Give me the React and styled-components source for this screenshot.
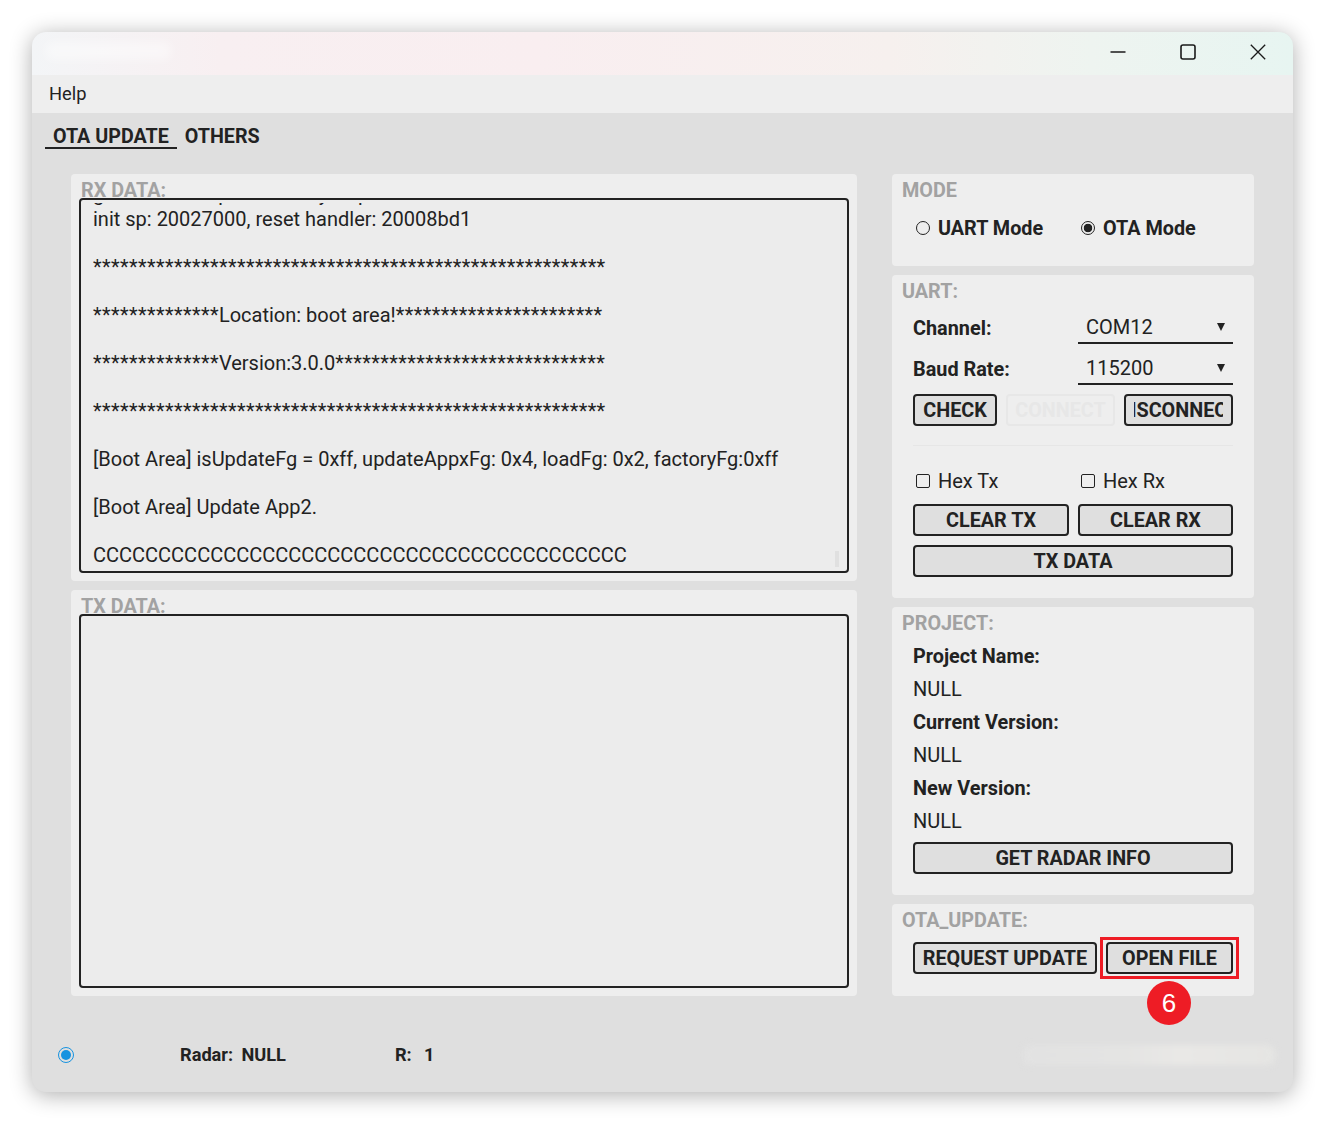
import React from 'react';
import styled, { createGlobalStyle } from 'styled-components';

const GlobalStyle = createGlobalStyle`
  html, body {
    margin: 0;
    padding: 0;
    background: #fff;
  }
  * {
    box-sizing: border-box;
  }
`;

const Page = styled.div`
  width: 1325px;
  height: 1124px;
  padding: 32px;
  overflow: hidden;
  font-family: Roboto, "Liberation Sans", sans-serif;
  font-size: 20px;
  color: #222;
`;

const Window = styled.div`
  width: 1261px;
  height: 1060px;
  display: flex;
  flex-direction: column;
  background: #dfdfdf;
  border-radius: 14px;
  overflow: hidden;
  box-shadow: 0 3px 22px rgba(0, 0, 0, 0.32);
`;

const TitleBar = styled.div`
  height: 43px;
  flex: none;
  display: flex;
  align-items: stretch;
  background: linear-gradient(90deg, #f3f5f7 0%, #f8eff1 15%, #f9eef0 40%, #f6f0ee 68%, #eef4f0 84%, #e7f5f1 100%);
`;

const BlurredTitle = styled.div`
  width: 125px;
  height: 18px;
  margin: 10px auto 0 14px;
  background: rgba(255, 255, 255, 0.42);
  border-radius: 6px;
  filter: blur(5px);
`;

const WinButton = styled.div`
  width: 70px;
  padding-bottom: 3px;
  display: flex;
  align-items: center;
  justify-content: center;
`;

const MenuBar = styled.div`
  height: 38px;
  flex: none;
  display: flex;
  align-items: center;
  padding: 0 0 1px 17px;
  background: #eee;
  font-size: 18.3px;
`;

const Tabs = styled.div`
  display: flex;
  height: 61px;
  flex: none;
  padding: 11px 0 0 13px;
`;

const Tab = styled.div`
  height: 25px;
  padding: 0 8px;
  line-height: 26px;
  font-size: 19.7px;
  font-weight: 700;
  border-bottom: 2px solid ${(p) => (p.$active ? '#222' : 'transparent')};
`;

const Main = styled.div`
  display: grid;
  grid-template-columns: 786px 362px;
  justify-content: space-between;
  padding: 0 39px;
  height: 822px;
  flex: none;
`;

const LeftColumn = styled.div`
  display: grid;
  grid-template-rows: 407px 406px;
  gap: 9px;
`;

const RightColumn = styled.div`
  display: flex;
  flex-direction: column;
  gap: 9px;
`;

const LogPanel = styled.section`
  display: flex;
  flex-direction: column;
  padding: 6px 8px 8px;
  background: #eee;
  border-radius: 4px;
  min-height: 0;
`;

const Panel = styled.section`
  padding: 6px 21px ${(p) => p.$bottom ?? 21}px;
  background: #eee;
  border-radius: 4px;
`;

const Title = styled.h2`
  margin: 0 0 0 2px;
  height: 18px;
  line-height: 22px;
  font-size: 19.8px;
  font-weight: 700;
  color: #a2a2a2;
  white-space: nowrap;
`;

const PanelTitle = styled(Title)`
  margin: 0 0 ${(p) => p.$gap ?? 13}px -11px;
`;

const TextBox = styled.div`
  position: relative;
  flex: 1;
  min-height: 0;
  padding: 3px 0 4px 12px;
  display: flex;
  background: #ececec;
  border: 2px solid #222;
  border-radius: 4px;
`;

const Log = styled.div`
  flex: 1;
  min-height: 0;
  overflow: hidden;
  display: flex;
  flex-direction: column;
  justify-content: flex-end;
`;

const LogLine = styled.div`
  flex: none;
  height: 24px;
  line-height: 24px;
  white-space: pre;
`;

const ClippedLine = styled(LogLine)`
  margin-bottom: 1px;
`;

const Stars = styled.span`
  letter-spacing: 0.38px;
`;

const ScrollThumb = styled.div`
  position: absolute;
  right: 8px;
  bottom: 4px;
  width: 4px;
  height: 16px;
  background: #e0e0e0;
`;

const TwoCols = styled.div`
  display: grid;
  grid-template-columns: 156px 155px;
  gap: 9px;
`;

const ModeRow = styled(TwoCols)`
  height: 30px;
`;

const CheckRow = styled(TwoCols)`
  height: 32px;
  margin-bottom: 7px;
`;

const Option = styled.label`
  display: flex;
  align-items: center;
  gap: 8px;
  padding-left: 3px;
  font-size: ${(p) => (p.$bold ? 19.8 : 20)}px;
  font-weight: ${(p) => (p.$bold ? 700 : 400)};
`;

const RadioInput = styled.input`
  appearance: none;
  width: 14px;
  height: 14px;
  margin: 0;
  flex: none;
  border: 1.3px solid #222;
  border-radius: 50%;
  background: transparent;

  &:checked {
    background: radial-gradient(circle, #222 0 4px, transparent 4.6px);
  }
`;

const CheckInput = styled(RadioInput)`
  border-radius: 2px;
`;

const FormRow = styled.div`
  display: grid;
  grid-template-columns: 165px 155px;
  align-items: center;
  height: 32px;
  margin-bottom: 9px;
  font-size: 19.85px;
  font-weight: 700;
`;

const Select = styled.div`
  display: flex;
  align-items: center;
  justify-content: space-between;
  height: 32px;
  padding: 0 8px;
  font-size: 20px;
  font-weight: 400;
  border-bottom: 2px solid #222;
`;

const Caret = styled.span`
  width: 0;
  height: 0;
  border-left: 4px solid transparent;
  border-right: 4px solid transparent;
  border-top: 8px solid #222;
`;

const Button = styled.button`
  height: 32px;
  width: 100%;
  padding: 0 8px;
  display: flex;
  align-items: center;
  justify-content: center;
  overflow: hidden;
  font: 700 19.8px Roboto, "Liberation Sans", sans-serif;
  white-space: nowrap;
  color: ${(p) => (p.disabled ? '#e7e7e7' : '#222')};
  background: ${(p) => (p.disabled ? 'transparent' : '#dfdfdf')};
  border: 2px solid ${(p) => (p.disabled ? '#e7e7e7' : '#222')};
  border-radius: 4px;
`;

const ClippedLabel = styled.span`
  display: flex;
  justify-content: center;
  width: 89px;
  overflow: hidden;
  flex: none;
`;

const ConnectRow = styled.div`
  display: grid;
  grid-template-columns: 84px 109px 109px;
  justify-content: space-between;
`;

const Divider = styled.hr`
  height: 1px;
  margin: 19px 0;
  border: 0;
  background: #e6e6e6;
`;

const StackButton = styled(Button)`
  margin-top: ${(p) => p.$top ?? 0}px;
`;

const InfoRow = styled.div`
  height: 33px;
  line-height: 33px;
  font-size: ${(p) => (p.$bold ? 19.85 : 20)}px;
  font-weight: ${(p) => (p.$bold ? 700 : 400)};
`;

const UpdateRow = styled.div`
  display: grid;
  grid-template-columns: 184px 127px;
  justify-content: space-between;
  padding-top: 14px;
`;

const Highlighted = styled.div`
  position: relative;
`;

const RedBox = styled.div`
  position: absolute;
  inset: -5px -6px;
  border: 3px solid #ee1c25;
  pointer-events: none;
`;

const StepBadge = styled.div`
  position: absolute;
  left: 41px;
  top: 39px;
  width: 44px;
  height: 44px;
  display: flex;
  align-items: center;
  justify-content: center;
  border-radius: 50%;
  background: #ee1c25;
  color: #fff;
  font: 400 26px "Liberation Sans", sans-serif;
`;

const StatusBar = styled.div`
  flex: 1;
  display: flex;
  align-items: center;
  padding: 21px 18px 0 26px;
  font-size: 18.2px;
  font-weight: 700;
  word-spacing: -0.4px;
`;

const StatusLed = styled.span`
  width: 16px;
  height: 16px;
  flex: none;
  padding: 2px;
  border: 1px solid #1793e0;
  border-radius: 50%;
  background: #1793e0;
  background-clip: content-box;
`;

const StatusText = styled.span`
  margin-left: ${(p) => p.$left}px;
  white-space: pre;
`;

const BlurredNote = styled.div`
  width: 252px;
  height: 20px;
  margin-left: auto;
  background: linear-gradient(90deg, #e2e2e2, #e4e4e3 40%, #e9e8e6 62%, #e5e5e3);
  border-radius: 6px;
  filter: blur(3px);
`;

const stars = (n) => <Stars>{'*'.repeat(n)}</Stars>;

const logLines = [
  'init sp: 20027000, reset handler: 20008bd1',
  '',
  stars(57),
  '',
  <>{stars(14)}Location: boot area!{stars(23)}</>,
  '',
  <>{stars(14)}Version:3.0.0{stars(30)}</>,
  '',
  stars(57),
  '',
  '[Boot Area] isUpdateFg = 0xff, updateAppxFg: 0x4, loadFg: 0x2, factoryFg:0xff',
  '',
  '[Boot Area] Update App2.',
  '',
  'C'.repeat(41),
];

const WindowIcon = ({ children }) => (
  <svg width="16" height="16" viewBox="0 0 16 16" fill="none" stroke="#1a1a1a" strokeWidth="1.3">
    {children}
  </svg>
);

const App = () => (
  <Page>
    <GlobalStyle />
    <Window>
      <TitleBar>
        <BlurredTitle />
        <WinButton>
          <WindowIcon>
            <path d="M0.5 8h15" />
          </WindowIcon>
        </WinButton>
        <WinButton>
          <WindowIcon>
            <rect x="1" y="1" width="14" height="14" rx="2" strokeWidth="1.6" />
          </WindowIcon>
        </WinButton>
        <WinButton>
          <WindowIcon>
            <path d="M0.8 0.8l14.4 14.4M15.2 0.8L0.8 15.2" />
          </WindowIcon>
        </WinButton>
      </TitleBar>
      <MenuBar>Help</MenuBar>
      <Tabs>
        <Tab $active>OTA UPDATE</Tab>
        <Tab>OTHERS</Tab>
      </Tabs>
      <Main>
        <LeftColumn>
          <LogPanel>
            <Title>RX DATA:</Title>
            <TextBox>
              <Log>
                <ClippedLine>{'g                       p                  y      p'}</ClippedLine>
                {logLines.map((line, i) => (
                  <LogLine key={i}>{line}</LogLine>
                ))}
              </Log>
              <ScrollThumb />
            </TextBox>
          </LogPanel>
          <LogPanel>
            <Title>TX DATA:</Title>
            <TextBox />
          </LogPanel>
        </LeftColumn>
        <RightColumn>
          <Panel $bottom={23}>
            <PanelTitle $gap={15}>MODE</PanelTitle>
            <ModeRow>
              <Option $bold>
                <RadioInput type="radio" name="mode" />
                UART Mode
              </Option>
              <Option $bold>
                <RadioInput type="radio" name="mode" defaultChecked />
                OTA Mode
              </Option>
            </ModeRow>
          </Panel>
          <Panel>
            <PanelTitle>UART:</PanelTitle>
            <FormRow>
              Channel:
              <Select>
                COM12
                <Caret />
              </Select>
            </FormRow>
            <FormRow>
              Baud Rate:
              <Select>
                115200
                <Caret />
              </Select>
            </FormRow>
            <ConnectRow>
              <Button>CHECK</Button>
              <Button disabled>CONNECT</Button>
              <Button>
                <ClippedLabel>DISCONNECT</ClippedLabel>
              </Button>
            </ConnectRow>
            <Divider />
            <CheckRow>
              <Option>
                <CheckInput type="checkbox" />
                Hex Tx
              </Option>
              <Option>
                <CheckInput type="checkbox" />
                Hex Rx
              </Option>
            </CheckRow>
            <TwoCols>
              <Button>CLEAR TX</Button>
              <Button>CLEAR RX</Button>
            </TwoCols>
            <StackButton $top={9}>TX DATA</StackButton>
          </Panel>
          <Panel>
            <PanelTitle $gap={9}>PROJECT:</PanelTitle>
            <InfoRow $bold>Project Name:</InfoRow>
            <InfoRow>NULL</InfoRow>
            <InfoRow $bold>Current Version:</InfoRow>
            <InfoRow>NULL</InfoRow>
            <InfoRow $bold>New Version:</InfoRow>
            <InfoRow>NULL</InfoRow>
            <StackButton $top={4}>GET RADAR INFO</StackButton>
          </Panel>
          <Panel $bottom={22}>
            <PanelTitle $gap={0}>OTA_UPDATE:</PanelTitle>
            <UpdateRow>
              <Button>REQUEST UPDATE</Button>
              <Highlighted>
                <Button>OPEN FILE</Button>
                <RedBox />
                <StepBadge>6</StepBadge>
              </Highlighted>
            </UpdateRow>
          </Panel>
        </RightColumn>
      </Main>
      <StatusBar>
        <StatusLed />
        <StatusText $left={106}>{'Radar:  NULL'}</StatusText>
        <StatusText $left={109}>{'R:   1'}</StatusText>
        <BlurredNote />
      </StatusBar>
    </Window>
  </Page>
);

export default App;
